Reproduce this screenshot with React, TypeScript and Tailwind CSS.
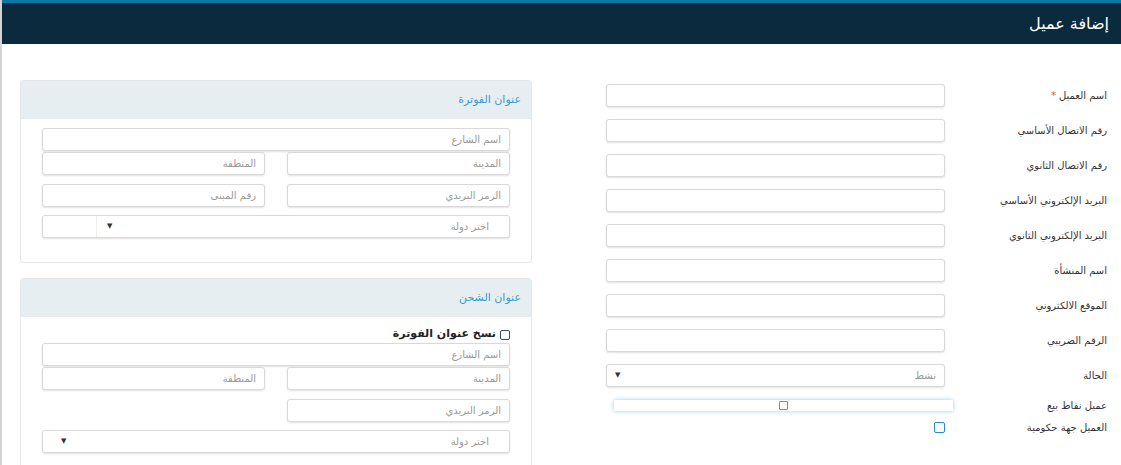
const inp = "h-[23px] rounded-[3px] border border-[#d9d9d9] bg-white shadow-[0_1px_2px_rgba(0,0,0,0.12)] px-[8px] text-[10px] text-[#999] flex items-center";

function Field({ label, req }: { label: string; req?: boolean }) {
  return (
    <div className="flex items-center h-[35px]">
      <div className="w-[170px] pr-[8px] text-[10px] text-[#333]">
        {label}
        {req && <span className="text-[#e0533b] mr-[3px]">*</span>}
      </div>
      <div className={inp + " w-[339px]"} />
    </div>
  );
}

function Address({ title, copy }: { title: string; copy?: boolean }) {
  return (
    <div className="w-[512px] rounded-[3px] border border-[#e3e7ea] bg-white">
      <div className="h-[38px] bg-[#e6eef1] flex items-center px-[10px] text-[11px] text-[#3a9ad0]">{title}</div>
      <div className="px-[21px] pt-[9px] pb-[24px] flex flex-col">
        {copy && (
          <label className="flex items-center gap-[4px] text-[11px] font-bold text-[#222] h-[17px] mt-[0px]">
            <span className="w-[10px] h-[10px] border border-[#2b4f8e] rounded-[2px]" />
            نسخ عنوان الفوترة
          </label>
        )}
        <div className={inp + " w-full"}>اسم الشارع</div>
        <div className="flex justify-between mt-[1px]">
          <div className={inp + " w-[223px]"}>المدينة</div>
          {!copy || true ? <div className={inp + " w-[223px]"}>المنطقة</div> : null}
        </div>
        <div className="flex justify-between mt-[9px]">
          <div className={inp + " w-[223px]"}>الرمز البريدي</div>
          {!copy && <div className={inp + " w-[223px]"}>رقم المبنى</div>}
        </div>
        <div className={inp + " w-full mt-[8px] text-[#333] justify-between px-0"}>
          <span className="pr-[12px]">اختر دولة</span>
          <span className="flex h-full items-center">
            <span className="text-[7px] text-[#333] ml-[10px]">▼</span>
            {!copy && <span className="w-[46px] h-full border-r border-[#eee]" />}
          </span>
        </div>
      </div>
    </div>
  );
}

export default function App() {
  return (
    <div dir="rtl" className="w-[1121px] h-[465px] bg-white overflow-hidden border-l-[2px] border-[#d4d4d4]" style={{ fontFamily: '"DejaVu Sans", sans-serif' }}>
      <div className="h-[3px] bg-[#0b79a6]" />
      <div className="h-[41px] bg-[#0b2a3e] flex items-center pr-[12px] text-white text-[16px]">إضافة عميل</div>
      <div className="flex pt-[34px] pr-[6px]">
        <div className="w-[509px]">
          <Field label="اسم العميل" req />
          <Field label="رقم الاتصال الأساسي" />
          <Field label="رقم الاتصال الثانوي" />
          <Field label="البريد الإلكتروني الأساسي" />
          <Field label="البريد الإلكتروني الثانوي" />
          <Field label="اسم المنشأة" />
          <Field label="الموقع الالكتروني" />
          <Field label="الرقم الضريبي" />
          <div className="flex items-center h-[35px]">
            <div className="w-[170px] pr-[8px] text-[10px] text-[#333]">الحالة</div>
            <div className={inp + " w-[339px] justify-between text-[#777]"}>
              <span>نشط</span>
              <span className="text-[7px] text-[#333]">▼</span>
            </div>
          </div>
          <div className="flex items-center h-[25px]">
            <div className="w-[162px] pr-[8px] text-[10px] text-[#333]">عميل نقاط بيع</div>
            <div className="w-[339px] h-[11px] bg-white shadow-[0_0_4px_rgba(80,170,220,0.6)] flex justify-center items-center">
              <span className="w-[9px] h-[9px] border border-[#888] rounded-[1px]" />
            </div>
          </div>
          <div className="flex items-center h-[18px]">
            <div className="w-[170px] pr-[8px] text-[10px] text-[#333]">العميل جهة حكومية</div>
            <span className="w-[11px] h-[11px] border border-[#2a8ad0] rounded-[2px]" />
          </div>
        </div>
        <div className="mr-[74px] mt-[2px] flex flex-col gap-[15px]">
          <Address title="عنوان الفوترة" />
          <Address title="عنوان الشحن" copy />
        </div>
      </div>
    </div>
  );
}
